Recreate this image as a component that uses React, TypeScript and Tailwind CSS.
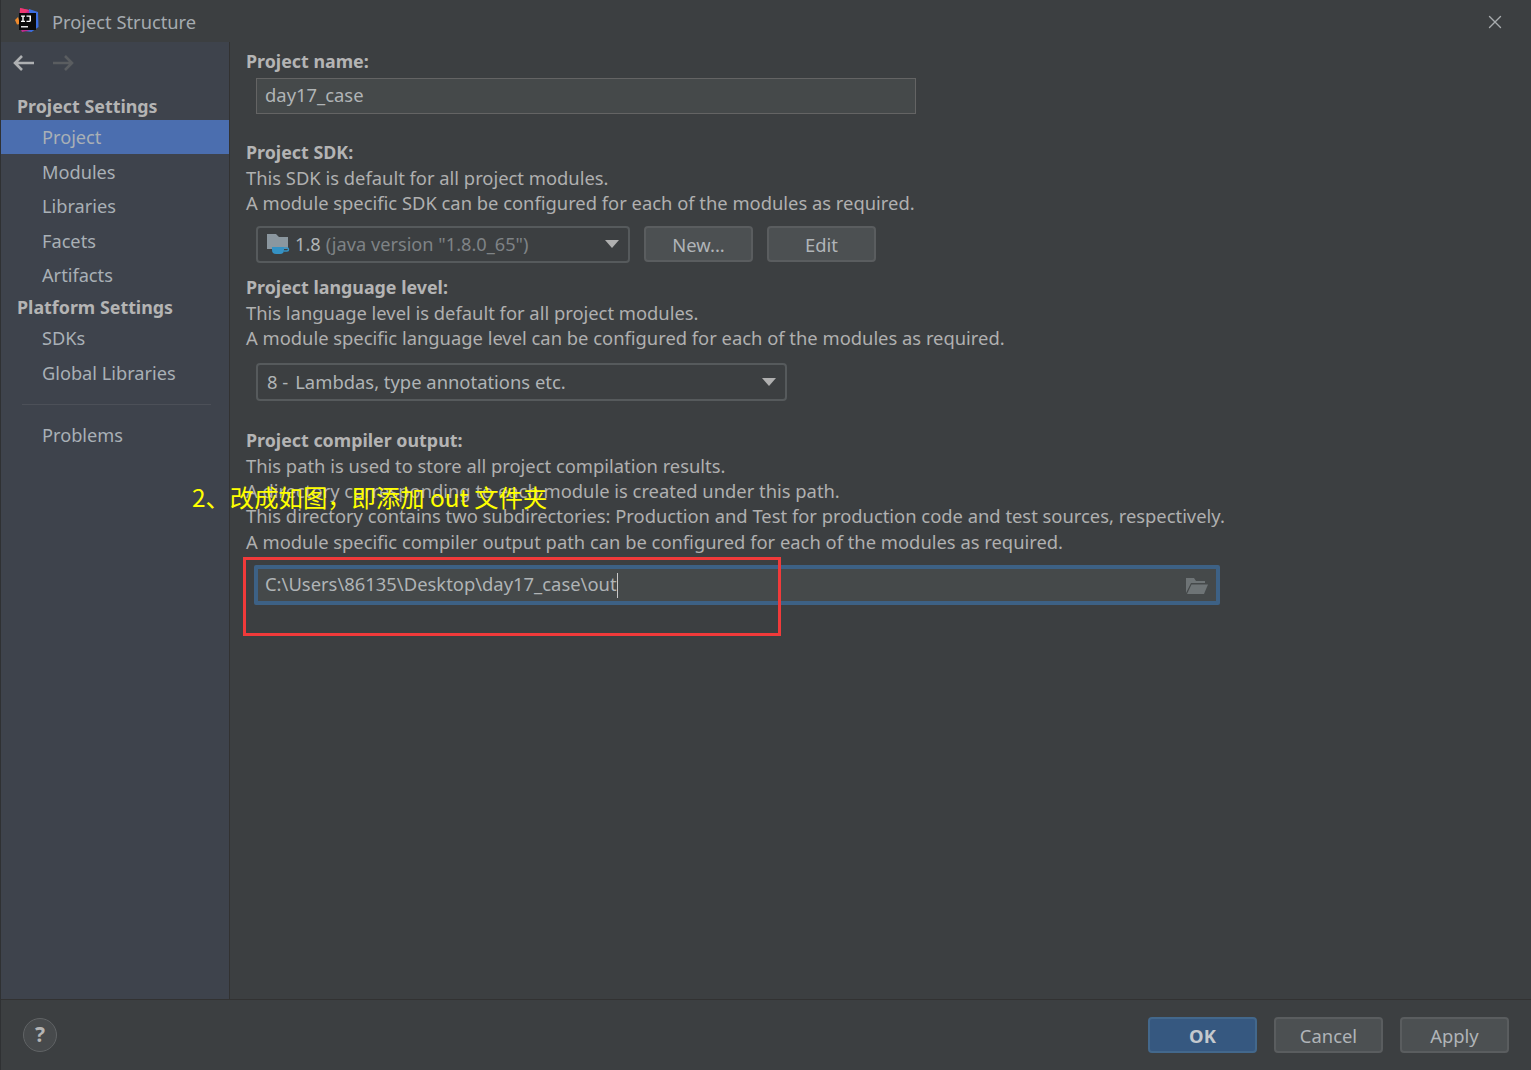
import React from 'react';
import { X } from 'lucide-react';

const font = { fontFamily: '"Noto Sans", "Noto Sans CJK SC", sans-serif' };

const NavItem = ({ label, active, h = 'h-[34.5px]' }: { label: string; active?: boolean; h?: string }) => (
    <div className={`${h} flex items-center pl-[41px] pt-[2px] text-[18.2px] text-[#a9b0b6] ${active ? 'bg-[#4b6eaf]' : ''}`}>{label}</div>
);

const Heading = ({ children, className = '' }: { children: React.ReactNode; className?: string }) => (
    <div className={`h-[26px] leading-[25px] text-[17.85px] font-bold text-[#b4b4b4] ${className}`}>{children}</div>
);

const Line = ({ children }: { children: React.ReactNode }) => (
    <div className="h-[25.4px] leading-[23.6px] text-[18.37px] text-[#b0b0b0] whitespace-nowrap">{children}</div>
);

const Caret = () => (
    <svg width="14" height="8" viewBox="0 0 14 8" className="shrink-0">
        <path d="M0 0h14L7 8z" fill="#b0b0b0" />
    </svg>
);

const Btn = ({ label, primary, className = '' }: { label: string; primary?: boolean; className?: string }) => (
    <div
        className={`w-[109px] h-[36px] flex items-center justify-center rounded-[4px] border-2 pt-[2px] text-[18.4px] ${
            primary ? 'bg-[#365880] border-[#43688c] text-[#c4c9ce] font-bold' : 'bg-[#4c5052] border-[#5a5d5f] text-[#b0b4b8]'
        } ${className}`}
    >
        {label}
    </div>
);

const NavArrow = ({ left, color }: { left?: boolean; color: string }) => (
    <svg width="21" height="16" viewBox="0 0 21 16" className={left ? '' : 'rotate-180'}>
        <path d="M21 8H2M9 1L2 8l7 7" fill="none" stroke={color} strokeWidth="2.6" />
    </svg>
);

const IdeaLogo = () => (
    <svg width="24" height="26" viewBox="0 0 24 26">
        <path d="M14 1l9 3 .5 15-7 5-7-1z" fill="#3b6ee0" />
        <path d="M5 0l9 2 2 20-9 2-3-7z" fill="#c22a8e" />
        <path d="M0 12l3-3 2 7-3 .5z" fill="#f08a2c" />
        <path d="M5 0l9 2-9 7z" fill="#f0376f" />
        <rect x="4" y="5" width="17" height="17" fill="#0a0a0a" />
        <rect x="6" y="18" width="7" height="1.5" fill="#e0e0e0" />
        <path d="M6 7.500h4v1.200H8.700v4.100H10V14H6v-1.200h1.300V8.700H6zM11.500 7.500h4.500V13l-1 1h-3.500v-1.200h3V8.700h-3z" fill="#ffffff" />
    </svg>
);

const SdkIcon = () => (
    <svg width="24" height="22" viewBox="0 0 24 22" className="shrink-0">
        <path d="M1 1h9l3 3h9v12H1z" fill="#8b979f" />
        <path d="M6 14h12v3a4 4 0 0 1-4 4h-4a4 4 0 0 1-4-4z" fill="#3592c4" />
        <path d="M18 15h3a1.500 1.500 0 0 1 0 3h-3" fill="none" stroke="#3592c4" strokeWidth="1.500" />
    </svg>
);

const OpenFolder = () => (
    <svg width="24" height="18" viewBox="0 0 24 18">
        <path d="M1 1h8l2 3h9v2H6L1 16z" fill="#6e7476" />
        <path d="M6.500 7.500H23L19 17H2z" fill="#6e7476" />
    </svg>
);

export default function App() {
    return (
        <div className="w-[1531px] h-[1070px] relative overflow-hidden flex flex-col bg-[#3c3f41] border-l border-[#2f3133]" style={font}>
            <div className="h-[42px] shrink-0 flex items-center pl-[14px] pr-[25px]">
                <IdeaLogo />
                <span className="ml-[13px] pt-[2px] text-[18.3px] text-[#a5abb0]">Project Structure</span>
                <X className="ml-auto mt-[1px] w-[22px] h-[22px] text-[#a8abad]" strokeWidth={1.5} />
            </div>

            <div className="flex-1 flex min-h-0">
                <aside className="w-[229px] shrink-0 bg-[#3e434c] border-r border-[#323232]">
                    <div className="h-[41px] flex items-center gap-[19px] pl-[12px]">
                        <NavArrow left color="#aeb0b2" />
                        <NavArrow color="#5a5d60" />
                    </div>
                    <div className="h-[37px] pt-[9px] pl-[16px] leading-[28px] text-[17.85px] font-bold text-[#b4b4b4]">Project Settings</div>
                    <NavItem label="Project" active h="h-[34px]" />
                    <NavItem label="Modules" />
                    <NavItem label="Libraries" />
                    <NavItem label="Facets" />
                    <NavItem label="Artifacts" />
                    <div className="h-[28px] pl-[16px] leading-[30px] text-[17.85px] font-bold text-[#b4b4b4]">Platform Settings</div>
                    <NavItem label="SDKs" h="h-[35px]" />
                    <NavItem label="Global Libraries" />
                    <div className="mt-[14px] mb-[13px] ml-[21px] mr-[18px] h-px bg-[#4c5058]" />
                    <NavItem label="Problems" />
                </aside>

                <main className="flex-1 pl-[16px] pt-[7px]">
                    <Heading>Project name:</Heading>
                    <div className="ml-[10px] mt-[3px] w-[660px] h-[36px] flex items-center pl-[8px] pb-[2px] bg-[#45494a] border border-[#646464] text-[18.4px] text-[#b0b4b6]">
                        day17_case
                    </div>

                    <Heading className="mt-[26px]">Project SDK:</Heading>
                    <Line>This SDK is default for all project modules.</Line>
                    <Line>A module specific SDK can be configured for each of the modules as required.</Line>
                    <div className="ml-[10px] mt-[9px] flex items-center gap-[14px]">
                        <div className="w-[374px] h-[37px] flex items-center pl-[8px] pr-[9px] rounded-[4px] border-2 border-[#565a5c] text-[18.2px]">
                            <SdkIcon />
                            <span className="ml-[5px] pt-[1px] text-[#b0b4b6]">1.8</span>
                            <span className="ml-[5px] pt-[1px] text-[#7f8386]">(java version "1.8.0_65")</span>
                            <span className="ml-auto flex"><Caret /></span>
                        </div>
                        <Btn label="New..." />
                        <Btn label="Edit" />
                    </div>

                    <Heading className="mt-[12px]">Project language level:</Heading>
                    <Line>This language level is default for all project modules.</Line>
                    <Line>A module specific language level can be configured for each of the modules as required.</Line>
                    <div className="ml-[10px] mt-[11px] w-[531px] h-[38px] flex items-center pl-[9px] pr-[9px] rounded-[4px] border-2 border-[#565a5c] text-[18.4px] text-[#b0b4b6]">
                        <span>8 -</span>
                        <span className="ml-[7px]">Lambdas, type annotations etc.</span>
                        <span className="ml-auto flex"><Caret /></span>
                    </div>

                    <Heading className="mt-[27px]">Project compiler output:</Heading>
                    <Line>This path is used to store all project compilation results.</Line>
                    <Line>A directory corresponding to each module is created under this path.</Line>
                    <Line>This directory contains two subdirectories: Production and Test for production code and test sources, respectively.</Line>
                    <Line>A module specific compiler output path can be configured for each of the modules as required.</Line>
                    <div className="ml-[8px] mt-[10px] w-[966px] h-[40px] flex items-center pl-[7px] pr-[7px] bg-[#45494a] border-[4px] border-[#3d6185] rounded-[2px] text-[18.4px] text-[#b0b4b6]">
                        <span className="pb-[2px]">C:\Users\86135\Desktop\day17_case\out</span>
                        <span className="w-px h-[25px] bg-[#c8c8c8]" />
                        <span className="ml-auto mt-[1px] flex"><OpenFolder /></span>
                    </div>
                </main>
            </div>

            <div className="h-[71px] shrink-0 border-t border-[#323232] flex items-center pl-[22px] pr-[22px] pb-[1px]">
                <div className="w-[34px] h-[34px] rounded-full bg-[#474a4c] border border-[#606365] flex items-center justify-center text-[21px] font-bold text-[#b4b4b4]">?</div>
                <Btn label="OK" primary className="ml-auto" />
                <Btn label="Cancel" className="ml-[17px]" />
                <Btn label="Apply" className="ml-[17px]" />
            </div>

            <div className="absolute left-[191px] top-[480px] text-[24.35px] leading-[34px] text-[#ffff00] whitespace-nowrap" style={{ fontFamily: '"Noto Sans CJK SC", sans-serif' }}>
                2、改成如图，即添加 out 文件夹
            </div>
            <div className="absolute left-[242px] top-[557px] w-[538px] h-[79px] border-[3px] border-[#f03a3a]" />
        </div>
    );
}
